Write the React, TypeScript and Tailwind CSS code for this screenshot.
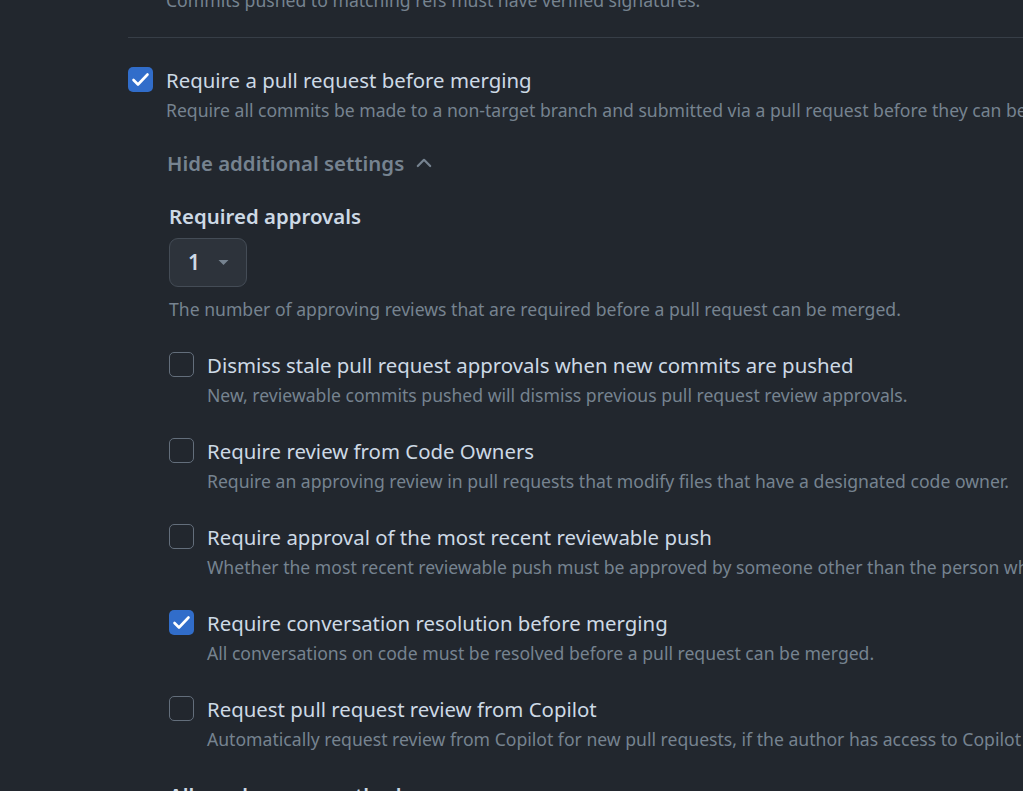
import React from "react";

interface RuleOptionProps {
  title: string;
  description: string;
  checked?: boolean;
}

function Checkbox({ checked }: { checked?: boolean }) {
  if (checked) {
    return (
      <div className="flex h-[25px] w-[25px] shrink-0 items-center justify-center rounded-[5px] bg-[#316dca]">
        <svg viewBox="0 0 25 25" className="h-[25px] w-[25px]" fill="none" stroke="#ffffff" strokeWidth="2.6" strokeLinecap="round" strokeLinejoin="round">
          <polyline points="5.5,13 10,17.5 19.5,7.5" />
        </svg>
      </div>
    );
  }
  return (
    <div className="h-[25px] w-[25px] shrink-0 rounded-[5px] border border-[#636e7b] bg-[#22272e]" />
  );
}

function RuleOption({ title, description, checked }: RuleOptionProps) {
  return (
    <div className="flex items-start gap-[13px]">
      <div className="pt-[2px]">
        <Checkbox checked={checked} />
      </div>
      <div className="whitespace-nowrap">
        <div className="text-[20.4px] leading-[30px] text-[#cdd9e5]">{title}</div>
        <div className="text-[17.6px] leading-[30px] text-[#768390]">{description}</div>
      </div>
    </div>
  );
}

const options: RuleOptionProps[] = [
  {
    title: "Dismiss stale pull request approvals when new commits are pushed",
    description: "New, reviewable commits pushed will dismiss previous pull request review approvals.",
  },
  {
    title: "Require review from Code Owners",
    description: "Require an approving review in pull requests that modify files that have a designated code owner.",
  },
  {
    title: "Require approval of the most recent reviewable push",
    description:
      "Whether the most recent reviewable push must be approved by someone other than the person who pushed it.",
  },
  {
    title: "Require conversation resolution before merging",
    description: "All conversations on code must be resolved before a pull request can be merged.",
    checked: true,
  },
  {
    title: "Request pull request review from Copilot",
    description:
      "Automatically request review from Copilot for new pull requests, if the author has access to Copilot code review.",
  },
];

export default function App() {
  return (
    <div
      className="h-[791px] w-[1023px] overflow-hidden bg-[#22272e] pl-[128px]"
      style={{ fontFamily: '"Noto Sans", "Open Sans", sans-serif' }}
    >
      <div className="-mt-[15px] whitespace-nowrap pl-[38px] text-[17.6px] leading-[30px] text-[#768390]">
        Commits pushed to matching refs must have verified signatures.
      </div>
      <div className="mt-[22px] border-t border-[#373e47]" />

      <div className="mt-[27px]">
        <RuleOption
          title="Require a pull request before merging"
          description="Require all commits be made to a non-target branch and submitted via a pull request before they can be merged."
          checked
        />
      </div>

      <div className="pl-[41px]">
        <button className="-ml-[2px] mt-[23px] flex items-center gap-[9px] text-[20.4px] font-semibold leading-[30px] text-[#768390]">
          Hide additional settings
          <svg viewBox="0 0 16 16" className="h-[22px] w-[22px]" fill="none" stroke="#768390" strokeWidth="1.6" strokeLinecap="round" strokeLinejoin="round">
            <polyline points="3.5,10.2 8,5.7 12.5,10.2" />
          </svg>
        </button>

        <div className="mt-[23px] text-[20.4px] font-semibold leading-[30px] text-[#cdd9e5]">Required approvals</div>
        <div className="mt-[7px] flex h-[49px] w-[78px] items-center gap-[18px] rounded-[9px] border border-[#444c56] bg-[#2d333b] pl-[18px]">
          <span className="text-[21px] font-semibold text-[#cdd9e5]">1</span>
          <svg viewBox="0 0 10 5" className="h-[5px] w-[11px]" fill="#768390">
            <path d="M0 0h10L5 5Z" />
          </svg>
        </div>
        <div className="mt-[7px] whitespace-nowrap text-[17.6px] leading-[30px] text-[#768390]">
          The number of approving reviews that are required before a pull request can be merged.
        </div>

        <div className="mt-[26px] flex flex-col gap-[26px]">
          {options.map((o) => (
            <RuleOption key={o.title} title={o.title} description={o.description} checked={o.checked} />
          ))}
        </div>

        <div className="mt-[26px] text-[20.4px] font-semibold leading-[30px] text-[#cdd9e5]">Allowed merge methods</div>
      </div>
    </div>
  );
}
